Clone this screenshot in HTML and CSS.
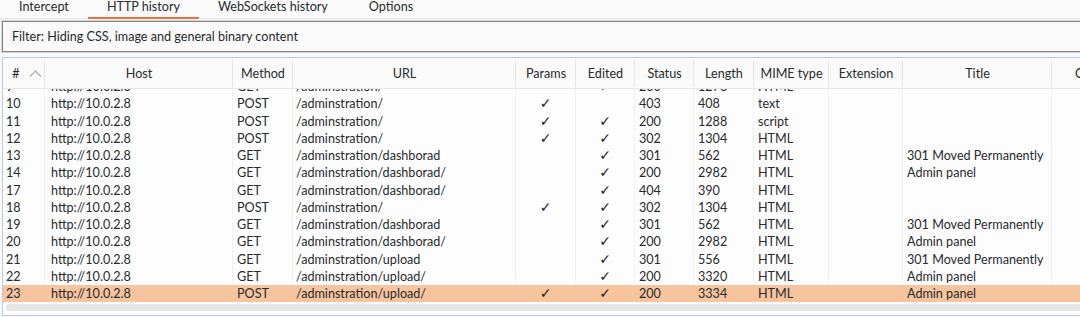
FILE: index.html
```html
<!DOCTYPE html>
<html lang="en">
<head>
    <meta charset="UTF-8">
    <title>Proxy - HTTP history</title>
    <link rel="stylesheet" href="styles.css">
</head>
<body>
    <div class="tabs">
        <div class="tab">Intercept</div>
        <div class="tab active">HTTP history</div>
        <div class="tab">WebSockets history</div>
        <div class="tab">Options</div>
    </div>

    <div class="filter">Filter: Hiding CSS, image and general binary content</div>

    <div class="history">
        <div class="row head">
            <div class="cell sort">#
                <svg width="13" height="7" viewBox="0 0 13 7"><path d="M1 6.5 L6.5 1 L12 6.5" fill="none" stroke="#a8a8a8" stroke-width="1.1"/></svg>
            </div>
            <div class="cell">Host</div>
            <div class="cell">Method</div>
            <div class="cell">URL</div>
            <div class="cell">Params</div>
            <div class="cell">Edited</div>
            <div class="cell">Status</div>
            <div class="cell">Length</div>
            <div class="cell">MIME type</div>
            <div class="cell">Extension</div>
            <div class="cell">Title</div>
            <div class="cell">Comment</div>
        </div>

        <div class="rows">
            <div class="rows-inner">
                <div class="row"><div class="cell">9</div><div class="cell">http://10.0.2.8</div><div class="cell">GET</div><div class="cell">/adminstration/</div><div class="cell check"></div><div class="cell check">✓</div><div class="cell">200</div><div class="cell">1278</div><div class="cell">HTML</div><div class="cell"></div><div class="cell"></div><div class="cell"></div></div>
                <div class="row"><div class="cell">10</div><div class="cell">http://10.0.2.8</div><div class="cell">POST</div><div class="cell">/adminstration/</div><div class="cell check">✓</div><div class="cell check"></div><div class="cell">403</div><div class="cell">408</div><div class="cell">text</div><div class="cell"></div><div class="cell"></div><div class="cell"></div></div>
                <div class="row"><div class="cell">11</div><div class="cell">http://10.0.2.8</div><div class="cell">POST</div><div class="cell">/adminstration/</div><div class="cell check">✓</div><div class="cell check">✓</div><div class="cell">200</div><div class="cell">1288</div><div class="cell">script</div><div class="cell"></div><div class="cell"></div><div class="cell"></div></div>
                <div class="row"><div class="cell">12</div><div class="cell">http://10.0.2.8</div><div class="cell">POST</div><div class="cell">/adminstration/</div><div class="cell check">✓</div><div class="cell check">✓</div><div class="cell">302</div><div class="cell">1304</div><div class="cell">HTML</div><div class="cell"></div><div class="cell"></div><div class="cell"></div></div>
                <div class="row"><div class="cell">13</div><div class="cell">http://10.0.2.8</div><div class="cell">GET</div><div class="cell">/adminstration/dashborad</div><div class="cell check"></div><div class="cell check">✓</div><div class="cell">301</div><div class="cell">562</div><div class="cell">HTML</div><div class="cell"></div><div class="cell">301 Moved Permanently</div><div class="cell"></div></div>
                <div class="row"><div class="cell">14</div><div class="cell">http://10.0.2.8</div><div class="cell">GET</div><div class="cell">/adminstration/dashborad/</div><div class="cell check"></div><div class="cell check">✓</div><div class="cell">200</div><div class="cell">2982</div><div class="cell">HTML</div><div class="cell"></div><div class="cell">Admin panel</div><div class="cell"></div></div>
                <div class="row"><div class="cell">17</div><div class="cell">http://10.0.2.8</div><div class="cell">GET</div><div class="cell">/adminstration/dashborad/</div><div class="cell check"></div><div class="cell check">✓</div><div class="cell">404</div><div class="cell">390</div><div class="cell">HTML</div><div class="cell"></div><div class="cell"></div><div class="cell"></div></div>
                <div class="row"><div class="cell">18</div><div class="cell">http://10.0.2.8</div><div class="cell">POST</div><div class="cell">/adminstration/</div><div class="cell check">✓</div><div class="cell check">✓</div><div class="cell">302</div><div class="cell">1304</div><div class="cell">HTML</div><div class="cell"></div><div class="cell"></div><div class="cell"></div></div>
                <div class="row"><div class="cell">19</div><div class="cell">http://10.0.2.8</div><div class="cell">GET</div><div class="cell">/adminstration/dashborad</div><div class="cell check"></div><div class="cell check">✓</div><div class="cell">301</div><div class="cell">562</div><div class="cell">HTML</div><div class="cell"></div><div class="cell">301 Moved Permanently</div><div class="cell"></div></div>
                <div class="row"><div class="cell">20</div><div class="cell">http://10.0.2.8</div><div class="cell">GET</div><div class="cell">/adminstration/dashborad/</div><div class="cell check"></div><div class="cell check">✓</div><div class="cell">200</div><div class="cell">2982</div><div class="cell">HTML</div><div class="cell"></div><div class="cell">Admin panel</div><div class="cell"></div></div>
                <div class="row"><div class="cell">21</div><div class="cell">http://10.0.2.8</div><div class="cell">GET</div><div class="cell">/adminstration/upload</div><div class="cell check"></div><div class="cell check">✓</div><div class="cell">301</div><div class="cell">556</div><div class="cell">HTML</div><div class="cell"></div><div class="cell">301 Moved Permanently</div><div class="cell"></div></div>
                <div class="row"><div class="cell">22</div><div class="cell">http://10.0.2.8</div><div class="cell">GET</div><div class="cell">/adminstration/upload/</div><div class="cell check"></div><div class="cell check">✓</div><div class="cell">200</div><div class="cell">3320</div><div class="cell">HTML</div><div class="cell"></div><div class="cell">Admin panel</div><div class="cell"></div></div>
                <div class="row selected"><div class="cell">23</div><div class="cell">http://10.0.2.8</div><div class="cell">POST</div><div class="cell">/adminstration/upload/</div><div class="cell check">✓</div><div class="cell check">✓</div><div class="cell">200</div><div class="cell">3334</div><div class="cell">HTML</div><div class="cell"></div><div class="cell">Admin panel</div><div class="cell"></div></div>
            </div>
        </div>

        <div class="hscroll"><div class="trough"></div></div>
    </div>
</body>
</html>
```

FILE: styles.css
```css
body {
    margin: 0;
    background-color: #fafafa;
    color: #272b2c;
    font-family: Lato, "Open Sans", sans-serif;
    font-size: 12.6px;
    overflow: hidden;
    width: 1080px;
    height: 317px;
}

/* tab strip */
.tabs {
    display: flex;
    height: 18px;
    border-bottom: 1px solid #dde4e0;
}
.tab {
    padding: 0 19px;
    line-height: 14px;
    height: 17px;
}
.tab.active {
    border-bottom: 2px solid #f0703c;
}
.tab:nth-child(4) { padding: 0 22px; }

/* filter bar */
.filter {
    margin: 2px -2px 0 2px;
    height: 29px;
    line-height: 29px;
    padding-left: 9px;
    border: 1px solid #858585;
    box-shadow: 0 0 0 1px #d4d4d4;
}

/* history table */
.history {
    margin: 5px -2px 0 2px;
    border: 1px solid #b3cae9;
    background-color: #fdfdfd;
}
.row {
    display: grid;
    grid-template-columns: 42px 188px 60px 223px 60px 59px 59px 60px 75px 74px 149px 100px;
    height: 17.27px;
    line-height: 17.27px;
    white-space: nowrap;
}
.cell {
    padding-left: 4px;
    overflow: hidden;
    border-right: 1px solid #f1f1f1;
}
.cell:first-child { padding-left: 3px; }
.cell:nth-child(2) { padding-left: 6px; }
.cell:nth-child(4) { padding-left: 3px; }
.check {
    text-align: center;
    font-family: "DejaVu Sans", sans-serif;
    font-size: 14px;
    color: #1f2324;
}
.row .check { padding-left: 0; }

.head {
    height: 30px;
    line-height: 30px;
    border-bottom: 1px solid #e6e6e6;
    background-color: #fafafa;
}
.head .cell {
    padding-left: 0;
    text-align: center;
    border-right: none;
    box-shadow: inset -1px 0 0 #e4e4e4;
    margin: 2px 0 1px;
    line-height: 27px;
}
.head .cell.sort {
    display: flex;
    align-items: center;
    justify-content: center;
    gap: 9px;
    padding-left: 6px;
}

.rows {
    height: 214px;
    overflow: hidden;
}
.rows-inner { margin-top: -11px; }

.selected { background-color: #f7c49e; }
.selected .cell { border-right-color: #f7c49e; }

.hscroll {
    height: 12px;
    padding: 1px 0 0 3px;
    box-sizing: border-box;
}
.trough {
    height: 7px;
    background-color: #e6e6e6;
    border-radius: 3px 0 0 3px;
}
```
